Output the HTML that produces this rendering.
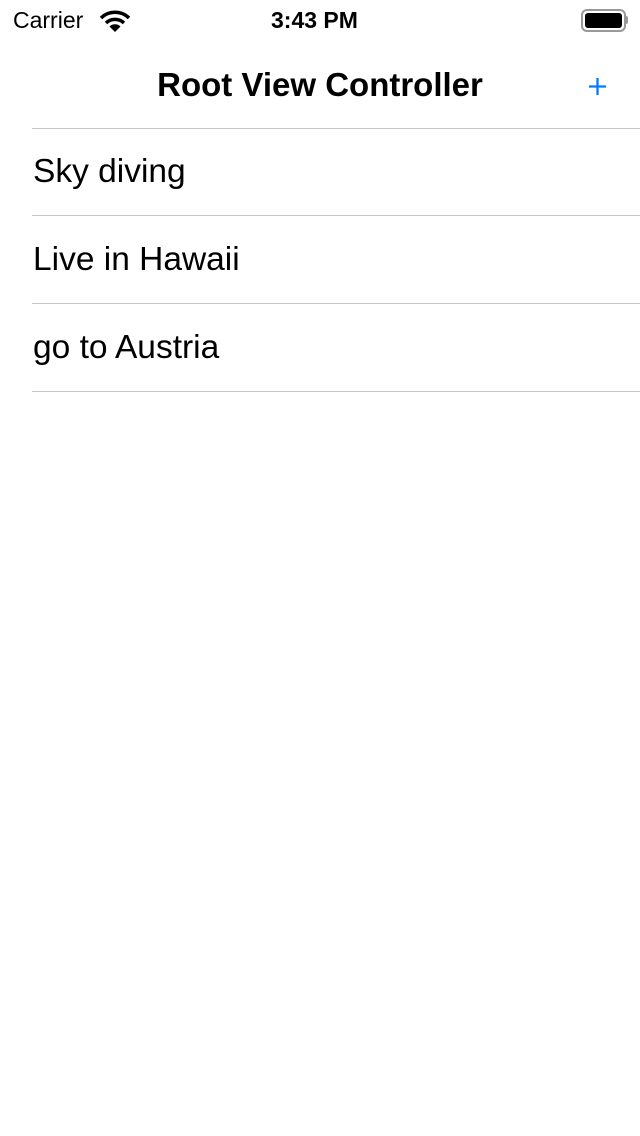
<!DOCTYPE html>
<html><head><style>
body{margin:0;width:640px;height:1136px;background:#fff;font-family:"Liberation Sans",sans-serif;position:relative;overflow:hidden}
.a{position:absolute;white-space:nowrap}
.row{position:absolute;left:33px;font-size:33.5px;color:#000}
.sep{position:absolute;left:32px;right:0;height:1px;background:#c8c7cc}
</style></head><body>
<div class="a" style="left:13px;top:7px;font-size:23px">Carrier</div>
<svg class="a" style="left:99px;top:9px" width="32" height="24" viewBox="0 0 32 24">
<path d="M2 9 A20 20 0 0 1 30 9" stroke="#000" stroke-width="3.5" fill="none"/>
<path d="M7 14 A13 13 0 0 1 25 14" stroke="#000" stroke-width="3.5" fill="none"/>
<path d="M10.5 17.5 L16 23 L21.5 17.5 A8 8 0 0 0 10.5 17.5Z" fill="#000"/>
</svg>
<div class="a" style="left:271px;top:7px;font-size:23px;font-weight:bold">3:43 PM</div>
<div class="a" style="left:581px;top:9px;width:41px;height:19px;border:2px solid #999;border-radius:6px"></div>
<div class="a" style="left:585px;top:13px;width:37px;height:15px;background:#000;border-radius:3px"></div>
<div class="a" style="left:625px;top:16px;width:3px;height:8px;background:#999;border-radius:0 2px 2px 0"></div>
<div class="a" style="left:0;width:640px;text-align:center;top:66px;font-size:33px;font-weight:bold">Root View Controller</div>
<svg class="a" style="left:589px;top:78px" width="17" height="17" viewBox="0 0 17 17"><path d="M8.5 0V17M0 8.5H17" stroke="#007aff" stroke-width="2.3"/></svg>
<div class="sep" style="top:128px"></div>
<div class="row" style="top:153px">Sky diving</div>
<div class="sep" style="top:215px"></div>
<div class="row" style="top:241px">Live in Hawaii</div>
<div class="sep" style="top:303px"></div>
<div class="row" style="top:329px">go to Austria</div>
<div class="sep" style="top:391px"></div>
</body></html>
